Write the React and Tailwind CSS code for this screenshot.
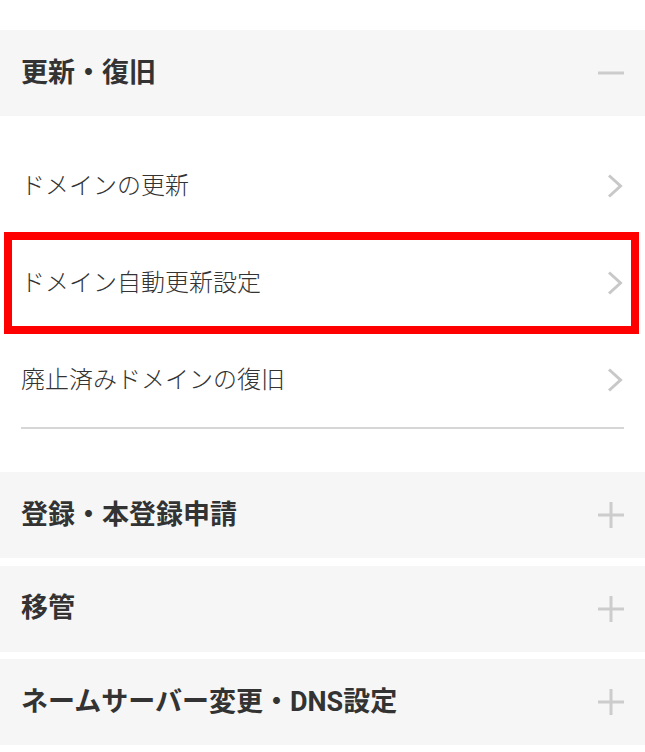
import React from 'react';

const FONT = { fontFamily: 'Roboto, "Noto Sans CJK JP", sans-serif' };

const Minus = () => (
  <svg width="26" height="26" viewBox="0 0 26 26" className="shrink-0">
    <line x1="0" y1="13" x2="26" y2="13" stroke="#cccccc" strokeWidth="3" />
  </svg>
);

const Plus = () => (
  <svg width="26" height="26" viewBox="0 0 26 26" className="shrink-0">
    <line x1="0" y1="13" x2="26" y2="13" stroke="#cccccc" strokeWidth="3" />
    <line x1="13" y1="0" x2="13" y2="26" stroke="#cccccc" strokeWidth="3" />
  </svg>
);

const Chevron = () => (
  <svg width="16" height="24" viewBox="0 0 16 24" className="shrink-0">
    <polyline
      points="2,1.5 13.5,12 2,22.5"
      fill="none"
      stroke="#c8c8c8"
      strokeWidth="3"
    />
  </svg>
);

const Header = ({ title, open }) => (
  <div className="flex h-[86px] items-center justify-between bg-[#f6f6f6] pl-[21px] pr-[21px]">
    <span className="text-[27px] font-bold leading-none text-[#333333]">{title}</span>
    {open ? <Minus /> : <Plus />}
  </div>
);

const Row = ({ label, highlight }) => (
  <div className="relative flex h-[97px] items-center justify-between pl-[21px] pr-[22px]">
    <span className="text-[24px] font-light leading-none text-[#333333]">{label}</span>
    <Chevron />
    {/* 注目枠 */}
    {highlight && (
      <div className="pointer-events-none absolute -top-[2px] -bottom-[3px] left-[4px] right-[6px] border-8 border-[#ff0000]" />
    )}
  </div>
);

const ITEMS = [
  { label: 'ドメインの更新' },
  { label: 'ドメイン自動更新設定', highlight: true },
  { label: '廃止済みドメインの復旧' },
];

const OTHERS = ['登録・本登録申請', '移管', 'ネームサーバー変更・DNS設定'];

export default function App() {
  return (
    <div className="h-[752px] w-full overflow-hidden bg-white pt-[30px]" style={FONT}>
      <Header title="更新・復旧" open />

      <div className="pt-[21px]">
        {ITEMS.map((item) => (
          <Row key={item.label} label={item.label} highlight={item.highlight} />
        ))}
        <div className="mx-[21px] -mt-[1px] h-[2px] bg-[#d6d6d6]" />
      </div>

      <div className="mt-[43px] flex flex-col gap-[7.5px]">
        {OTHERS.map((title) => (
          <Header key={title} title={title} />
        ))}
      </div>
    </div>
  );
}
